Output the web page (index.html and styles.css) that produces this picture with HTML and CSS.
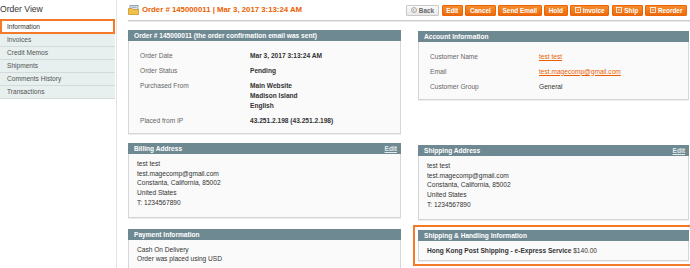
FILE: index.html
```html
<!DOCTYPE html>
<html>
<head>
<meta charset="utf-8">
<link rel="stylesheet" href="styles.css">
</head>
<body>
<div class="page">
  <aside class="sidebar">
    <h3 class="side-title">Order View</h3>
    <ul class="tabs">
      <li class="tab active">Information</li>
      <li class="tab">Invoices</li>
      <li class="tab">Credit Memos</li>
      <li class="tab">Shipments</li>
      <li class="tab">Comments History</li>
      <li class="tab">Transactions</li>
    </ul>
  </aside>
  <main class="main">
    <div class="title-bar">
      <h1 class="page-title">
        <svg class="title-icon" width="11" height="10" viewBox="0 0 11 10">
          <rect x="2" y="0.5" width="8" height="5" fill="#dfe7ee" stroke="#7b93a6" stroke-width="0.8"/>
          <rect x="3.5" y="1.8" width="5" height="0.8" fill="#7b93a6"/>
          <path d="M0.5 3.5 H4 L5 4.5 H10.5 V9.5 H0.5 Z" fill="#f3c14b" stroke="#c9962a" stroke-width="0.8"/>
        </svg>
        <span>Order # 145000011 | Mar 3, 2017 3:13:24 AM</span>
      </h1>
      <div class="actions">
        <button class="btn btn-back"><svg width="6" height="6" viewBox="0 0 6 6"><circle cx="3" cy="3" r="2.5" fill="none" stroke="#888" stroke-width="0.7"/><path d="M3.4 1.8 L2.2 3 L3.4 4.2" fill="none" stroke="#888" stroke-width="0.7"/></svg>Back</button>
        <button class="btn">Edit</button>
        <button class="btn">Cancel</button>
        <button class="btn">Send Email</button>
        <button class="btn">Hold</button>
        <button class="btn"><svg width="6" height="6" viewBox="0 0 6 6"><rect x="0.5" y="0.5" width="5" height="5" fill="none" stroke="#fff" stroke-width="0.8"/><path d="M1.8 3 H4.2" stroke="#fff" stroke-width="0.8"/></svg>Invoice</button>
        <button class="btn"><svg width="6" height="6" viewBox="0 0 6 6"><rect x="0.5" y="0.5" width="5" height="5" fill="none" stroke="#fff" stroke-width="0.8"/><path d="M1.8 3 H4.2" stroke="#fff" stroke-width="0.8"/></svg>Ship</button>
        <button class="btn"><svg width="6" height="6" viewBox="0 0 6 6"><rect x="0.5" y="0.5" width="5" height="5" fill="none" stroke="#fff" stroke-width="0.8"/><path d="M1.8 3 H4.2" stroke="#fff" stroke-width="0.8"/></svg>Reorder</button>
      </div>
    </div>

    <div class="columns">
      <section class="box box-order">
        <div class="box-head"><span>Order # 145000011 (the order confirmation email was sent)</span></div>
        <div class="box-body info-table">
          <div class="row"><span class="label">Order Date</span><span class="value">Mar 3, 2017 3:13:24 AM</span></div>
          <div class="row"><span class="label">Order Status</span><span class="value">Pending</span></div>
          <div class="row"><span class="label">Purchased From</span><span class="value">Main Website<br>Madison Island<br>English</span></div>
          <div class="row"><span class="label">Placed from IP</span><span class="value">43.251.2.198 (43.251.2.198)</span></div>
        </div>
      </section>

      <section class="box box-account right">
        <div class="box-head"><span>Account Information</span></div>
        <div class="box-body info-table account">
          <div class="row"><span class="label">Customer Name</span><span class="value link">test test</span></div>
          <div class="row"><span class="label">Email</span><span class="value link">test.magecomp@gmail.com</span></div>
          <div class="row"><span class="label">Customer Group</span><span class="value plain">General</span></div>
        </div>
      </section>

      <section class="box">
        <div class="box-head"><span>Billing Address</span><a class="edit">Edit</a></div>
        <div class="box-body address">
          test test<br>test.magecomp@gmail.com<br>Constanta, California, 85002<br>United States<br>T: 1234567890
        </div>
      </section>

      <section class="box right shift">
        <div class="box-head"><span>Shipping Address</span><a class="edit">Edit</a></div>
        <div class="box-body address">
          test test<br>test.magecomp@gmail.com<br>Constanta, California, 85002<br>United States<br>T: 1234567890
        </div>
      </section>

      <section class="box box-payment">
        <div class="box-head"><span>Payment Information</span></div>
        <div class="box-body short">
          Cash On Delivery<br>Order was placed using USD
        </div>
      </section>

      <section class="box right highlight">
        <div class="box-head"><span>Shipping &amp; Handling Information</span></div>
        <div class="box-body short">
          <b>Hong Kong Post Shipping - e-Express Service</b> $140.00
        </div>
      </section>
    </div>
  </main>
</div>
</body>
</html>
```

FILE: styles.css
```css
* { box-sizing: border-box; }

html, body {
  margin: 0;
  padding: 0;
  background: #ffffff;
}

body {
  width: 690px;
  height: 268px;
  overflow: hidden;
  font-family: "Liberation Sans", Arial, sans-serif;
  font-size: 6.6px;
  color: #2f2f2f;
}

.page {
  display: flex;
  height: 268px;
}

/* Sidebar */
.sidebar {
  flex: none;
  width: 117px;
  border-right: 1px solid #e3e3e3;
  padding-top: 3px;
  padding-right: 1px;
}

.side-title {
  margin: 0 0 4px 0;
  font-size: 8.6px;
  font-weight: normal;
  line-height: 12px;
  color: #333;
}

.tabs {
  list-style: none;
  margin: 0;
  padding: 0;
  width: 115px;
}

.tab {
  height: 13px;
  line-height: 12px;
  padding-left: 7px;
  background: #e7efef;
  border-bottom: 1px solid #d2dada;
  color: #555;
}

.tab.active {
  height: 15px;
  line-height: 11px;
  padding-left: 5px;
  background: #ffffff;
  border: 2px solid #f47a2a;
  color: #333;
}

/* Main */
.main {
  flex: 1;
  padding-left: 11px;
  min-width: 0;
}

.title-bar {
  display: flex;
  align-items: center;
  justify-content: space-between;
  height: 21px;
  padding-right: 3px;
  border-bottom: 1px solid #cfcfcf;
  box-shadow: 0 1px 0 #e6e6e6;
}

.page-title {
  display: flex;
  align-items: center;
  gap: 3px;
  margin: 0;
  font-size: 7.8px;
  font-weight: bold;
  color: #eb5e00;
  line-height: 10px;
}

.title-icon { flex: none; }

.actions {
  display: flex;
  gap: 2.5px;
}

.btn {
  display: flex;
  align-items: center;
  gap: 2px;
  height: 11px;
  padding: 0 3.6px;
  margin: 0;
  border: 1px solid #ed6502;
  border-radius: 1px;
  background: linear-gradient(#f68e2e, #ec6a0f);
  color: #ffffff;
  font-family: "Liberation Sans", Arial, sans-serif;
  font-size: 6.4px;
  font-weight: bold;
  line-height: 9px;
}

.btn-back {
  background: linear-gradient(#fbfbfb, #e8e8e8);
  border-color: #c9c9c9;
  color: #666;
  padding: 0 4px;
}

/* Columns */
.columns {
  display: grid;
  grid-template-columns: 273px 1fr;
  column-gap: 17px;
  row-gap: 9px;
  margin-top: 9px;
  padding-right: 1px;
  align-items: start;
}

.box-head {
  display: flex;
  justify-content: space-between;
  align-items: center;
  height: 11px;
  padding: 0 4px 0 6px;
  background: #6f8992;
  color: #ffffff;
  font-weight: bold;
}

.edit {
  color: #e6eaec;
  text-decoration: underline;
  font-weight: bold;
}

.box-body {
  background: #fafafa;
  border: 1px solid #d6d6d6;
  border-top: none;
  box-shadow: 0 1px 0 #ededed;
}

.info-table {
  padding: 7px 0 5px 11px;
}

.row {
  display: grid;
  grid-template-columns: 110px 1fr;
  padding: 2.5px 0;
  line-height: 10px;
}

.label { color: #666; }

.value { font-weight: bold; color: #333; }

.account .row { grid-template-columns: 109px 1fr; }

.value.link {
  font-weight: normal;
  color: #eb5e00;
  text-decoration: underline;
}

.value.plain { font-weight: normal; }

.right { margin-top: 1px; }
.right.shift { margin-top: 2px; }

.address {
  padding: 5px 0 9px 8px;
  line-height: 9.7px;
  color: #333;
}

.short {
  padding: 5px 0 5px 8px;
  line-height: 9.7px;
  color: #333;
}

.box-payment .short { height: 31px; }

.highlight {
  outline: 2px solid #f47a2a;
  outline-offset: 3px;
}
```
